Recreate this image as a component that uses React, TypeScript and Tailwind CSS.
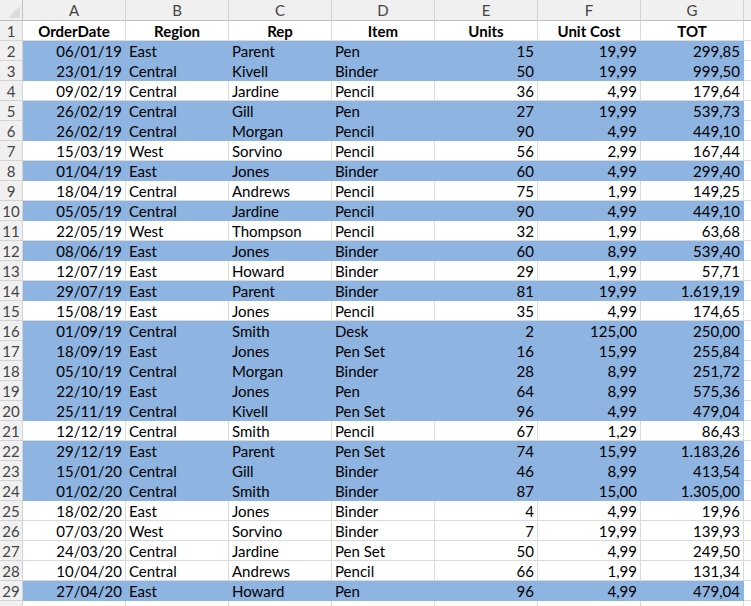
const rows: [string, string, string, string, number, string, string, boolean][] = [
  ["06/01/19", "East", "Parent", "Pen", 15, "19,99", "299,85", true],
  ["23/01/19", "Central", "Kivell", "Binder", 50, "19,99", "999,50", true],
  ["09/02/19", "Central", "Jardine", "Pencil", 36, "4,99", "179,64", false],
  ["26/02/19", "Central", "Gill", "Pen", 27, "19,99", "539,73", true],
  ["26/02/19", "Central", "Morgan", "Pencil", 90, "4,99", "449,10", true],
  ["15/03/19", "West", "Sorvino", "Pencil", 56, "2,99", "167,44", false],
  ["01/04/19", "East", "Jones", "Binder", 60, "4,99", "299,40", true],
  ["18/04/19", "Central", "Andrews", "Pencil", 75, "1,99", "149,25", false],
  ["05/05/19", "Central", "Jardine", "Pencil", 90, "4,99", "449,10", true],
  ["22/05/19", "West", "Thompson", "Pencil", 32, "1,99", "63,68", false],
  ["08/06/19", "East", "Jones", "Binder", 60, "8,99", "539,40", true],
  ["12/07/19", "East", "Howard", "Binder", 29, "1,99", "57,71", false],
  ["29/07/19", "East", "Parent", "Binder", 81, "19,99", "1.619,19", true],
  ["15/08/19", "East", "Jones", "Pencil", 35, "4,99", "174,65", false],
  ["01/09/19", "Central", "Smith", "Desk", 2, "125,00", "250,00", true],
  ["18/09/19", "East", "Jones", "Pen Set", 16, "15,99", "255,84", true],
  ["05/10/19", "Central", "Morgan", "Binder", 28, "8,99", "251,72", true],
  ["22/10/19", "East", "Jones", "Pen", 64, "8,99", "575,36", true],
  ["25/11/19", "Central", "Kivell", "Pen Set", 96, "4,99", "479,04", true],
  ["12/12/19", "Central", "Smith", "Pencil", 67, "1,29", "86,43", false],
  ["29/12/19", "East", "Parent", "Pen Set", 74, "15,99", "1.183,26", true],
  ["15/01/20", "Central", "Gill", "Binder", 46, "8,99", "413,54", true],
  ["01/02/20", "Central", "Smith", "Binder", 87, "15,00", "1.305,00", true],
  ["18/02/20", "East", "Jones", "Binder", 4, "4,99", "19,96", false],
  ["07/03/20", "West", "Sorvino", "Binder", 7, "19,99", "139,93", false],
  ["24/03/20", "Central", "Jardine", "Pen Set", 50, "4,99", "249,50", false],
  ["10/04/20", "Central", "Andrews", "Pencil", 66, "1,99", "131,34", false],
  ["27/04/20", "East", "Howard", "Pen", 96, "4,99", "479,04", true],
];

const cols = ["A", "B", "C", "D", "E", "F", "G"];
const heads = ["OrderDate", "Region", "Rep", "Item", "Units", "Unit Cost", "TOT"];

function RowNum({ n }: { n: number }) {
  return (
    <div className="h-5 bg-[#f0f0f0] border-r border-b border-[#d4d4d4] text-[#444] text-center leading-[21px] overflow-hidden">
      {n}
    </div>
  );
}

function Cell({ v, right, blue }: { v: string | number; right?: boolean; blue?: boolean }) {
  return (
    <div
      className={`h-5 border-r border-b px-[3px] leading-[21px] whitespace-nowrap overflow-hidden ${
        right ? "text-right" : "text-left"
      } ${blue ? "bg-[#8eb4e2] border-[#8eb4e2]" : "bg-white border-[#dadada]"}`}
    >
      {v}
    </div>
  );
}

export default function App() {
  return (
    <div className="w-[751px] h-[606px] overflow-hidden bg-white text-[15px] text-black font-['Lato','Liberation_Sans',sans-serif]">
      <div className="grid grid-cols-[23px_repeat(7,103px)_1fr]">
        {/* column headers */}
        <div className="h-[21px] bg-[#f0f0f0] border-r border-b border-[#bdbdbd] relative overflow-hidden">
          <div className="absolute right-[2px] bottom-[2px] w-0 h-0 [border-bottom:12px_solid_#dcdcdc] [border-left:12px_solid_transparent]" />
        </div>
        {cols.map((c) => (
          <div key={c} className="h-[21px] bg-[#f0f0f0] border-r border-b border-r-[#d4d4d4] border-b-[#bdbdbd] text-center text-[#444] leading-[21px]">
            {c}
          </div>
        ))}
        <div className="h-[21px] bg-[#f0f0f0] border-b border-[#bdbdbd]" />

        {/* header row */}
        <RowNum n={1} />
        {heads.map((h) => (
          <div key={h} className="h-5 border-r border-b border-[#dadada] text-center font-bold leading-[21px]">
            {h}
          </div>
        ))}
        <div className="h-5 border-b border-[#dadada]" />

        {rows.map((r, i) => (
          <div key={i} className="contents">
            <RowNum n={i + 2} />
            <Cell v={r[0]} right blue={r[7]} />
            <Cell v={r[1]} blue={r[7]} />
            <Cell v={r[2]} blue={r[7]} />
            <Cell v={r[3]} blue={r[7]} />
            <Cell v={r[4]} right blue={r[7]} />
            <Cell v={r[5]} right blue={r[7]} />
            <Cell v={r[6]} right blue={r[7]} />
            <div className="h-5 border-b border-[#dadada]" />
          </div>
        ))}

        <RowNum n={30} />
        <Cell v="13/05/20" right />
        {[1, 2, 3, 4, 5, 6].map((k) => (
          <Cell key={k} v="" />
        ))}
        <div className="h-5 border-b border-[#dadada]" />
      </div>
    </div>
  );
}
